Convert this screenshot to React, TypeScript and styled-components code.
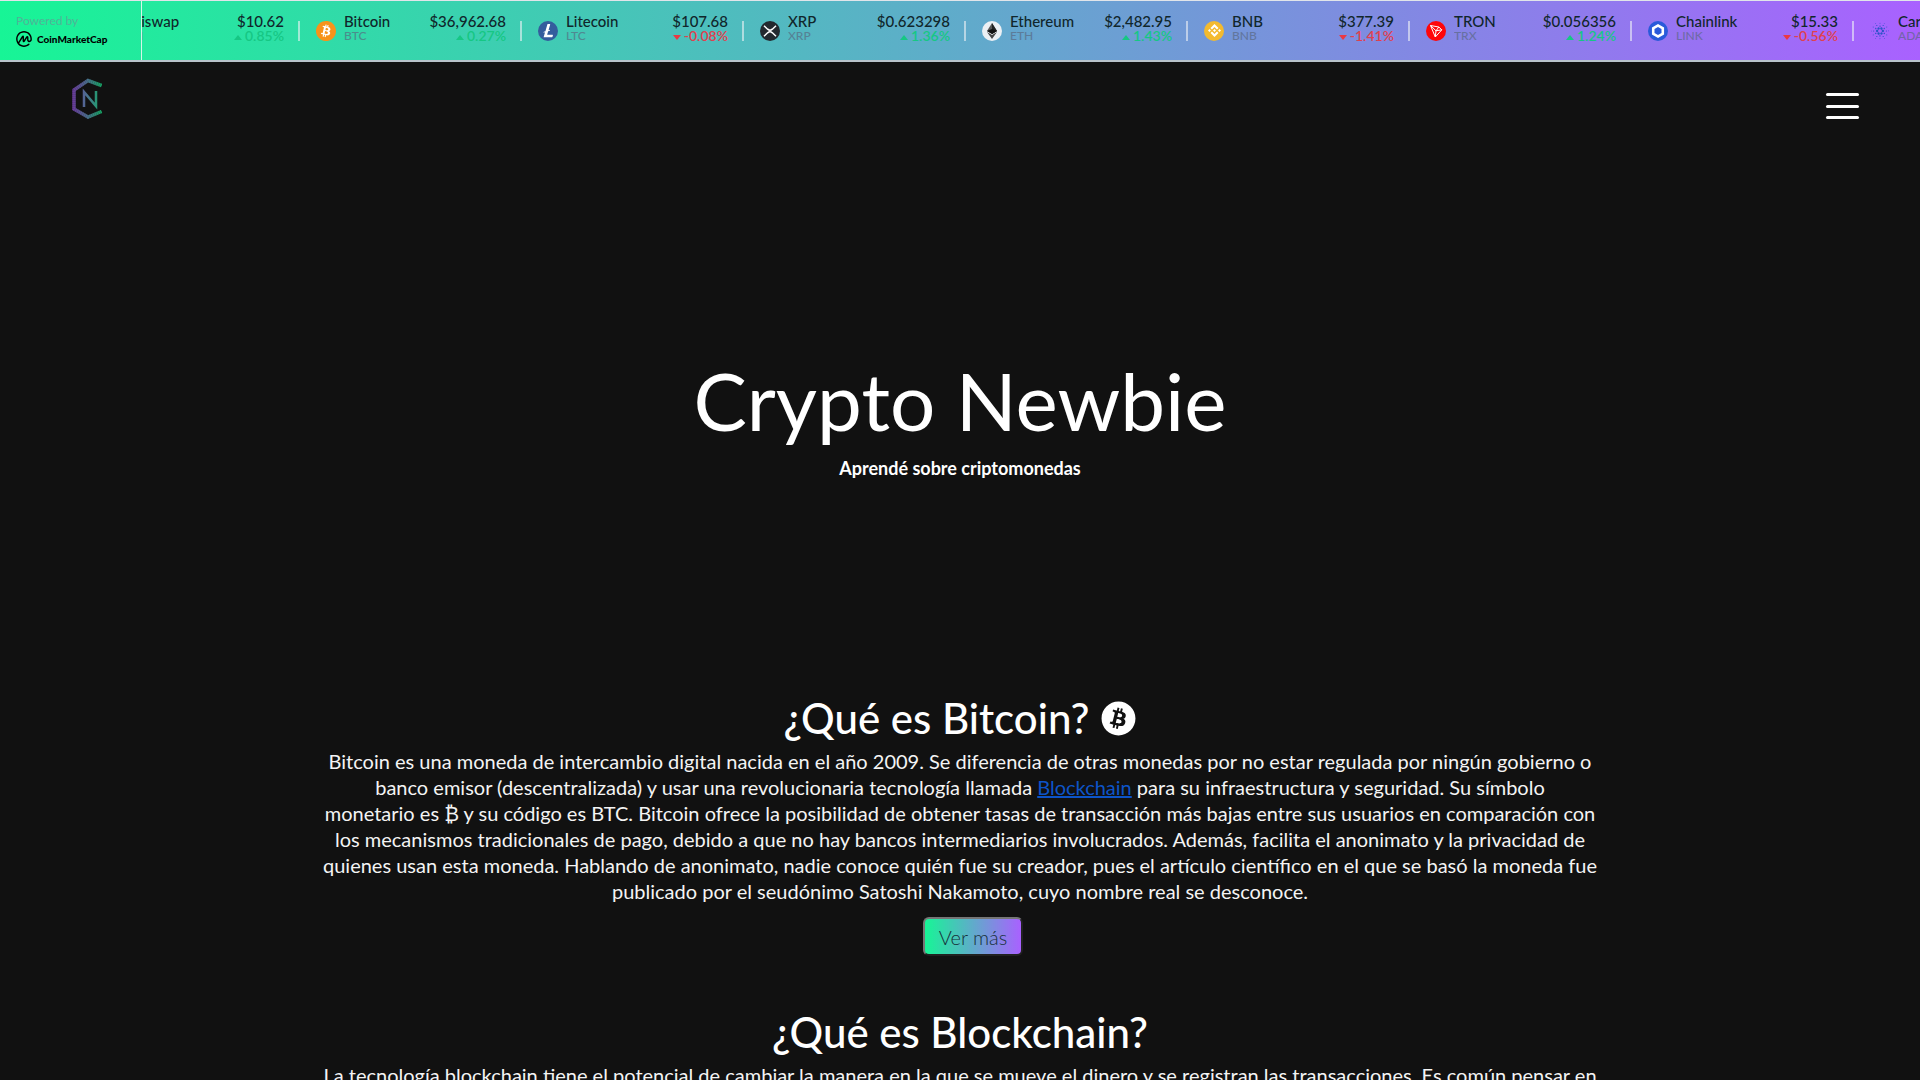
import React from "react";
import styled, { createGlobalStyle } from "styled-components";
import { FaBitcoin } from "react-icons/fa";
import { SiBitcoin, SiLitecoin, SiBinance, SiChainlink, SiCardano, SiCoinmarketcap } from "react-icons/si";

const GlobalStyle = createGlobalStyle`
  *, *::before, *::after { box-sizing: border-box; }
  body {
    margin: 0;
    background: #111;
    color: #fff;
    font-family: Lato, "Open Sans", sans-serif;
    overflow: hidden;
    height: 100vh;
  }
`;

const Ticker = styled.section`
  display: flex;
  height: 62px;
  border-top: 1px solid #e1e5ea;
  border-bottom: 2px solid #b9c3cb;
  background: linear-gradient(90deg, #17f596 0%, #a961ff 100%);
  color: #10262b;
`;

const Powered = styled.a`
  flex: none;
  width: 142px;
  padding: 12px 0 0 16px;
  border-right: 1px solid #d5f5e8;
  color: #000;
  text-decoration: none;
`;

const PoweredLabel = styled.span`
  display: block;
  font-size: 12px;
  line-height: 16px;
  color: #4fb497;
`;

const Brand = styled.span`
  display: flex;
  align-items: center;
  gap: 5px;
  font-size: 10px;
  line-height: 20px;
  font-weight: 900;
`;

const Viewport = styled.div`
  flex: 1;
  min-width: 0;
  overflow: hidden;
`;

const Track = styled.ul`
  display: flex;
  align-items: center;
  height: 100%;
  margin: 0 0 0 -64px;
  padding: 0;
  list-style: none;
`;

const Item = styled.li`
  flex: none;
  display: flex;
  align-items: center;
  gap: 8px;
  width: 222px;
  padding: 0 16px;
  position: relative;
  &::after {
    content: "";
    position: absolute;
    right: 0;
    width: 2px;
    height: 20px;
    background: rgba(239, 242, 245, 0.6);
  }
`;

const Disc = styled.span<{ $bg: string }>`
  flex: none;
  display: grid;
  place-items: center;
  width: 20px;
  height: 20px;
  border-radius: 50%;
  background: ${(p) => p.$bg};
  color: #fff;
`;

const Coin = styled.span`
  flex: 1;
  padding-bottom: 6px;
  font-size: 15px;
  font-weight: 500;
  line-height: 16px;
`;

const Code = styled.span`
  display: block;
  font-size: 12px;
  line-height: 13px;
  color: #58667e;
  opacity: 0.65;
`;

const Quote = styled(Coin)`
  flex: none;
  text-align: right;
`;

const Change = styled.span<{ $up: boolean }>`
  display: flex;
  align-items: center;
  justify-content: flex-end;
  gap: 3px;
  font-size: 14px;
  font-weight: 600;
  line-height: 13px;
  color: ${(p) => (p.$up ? "#16c784" : "#e0404e")};
  &::before {
    content: "";
    margin-top: 4px;
    border: 4px solid transparent;
    border-top-width: ${(p) => (p.$up ? 0 : 5)}px;
    border-bottom-width: ${(p) => (p.$up ? 5 : 0)}px;
    border-top-color: ${(p) => (p.$up ? "transparent" : "#ea3943")};
    border-bottom-color: ${(p) => (p.$up ? "#16c784" : "transparent")};
  }
`;

const Nav = styled.nav`
  display: flex;
  justify-content: space-between;
  padding: 16px 61px 0 70px;
`;

const MenuButton = styled.button`
  display: grid;
  align-content: space-between;
  width: 33px;
  height: 26px;
  margin-top: 15px;
  padding: 0;
  border: 0;
  background: none;
`;

const MenuBar = styled.span`
  height: 3px;
  border-radius: 2px;
  background: #fff;
`;

const Hero = styled.header`
  padding-top: 229px;
  text-align: center;
`;

const Title = styled.h1`
  margin: 0;
  font-size: 80px;
  line-height: 96px;
  font-weight: 400;
`;

const Lead = styled.p`
  margin: 8px 0 0;
  font-size: 18px;
  line-height: 24px;
  font-weight: 700;
`;

const Topic = styled.section`
  max-width: 1300px;
  margin: 0 auto;
  text-align: center;
`;

const Topics = styled.main`
  display: grid;
  gap: 46px;
  padding-top: 208px;
`;

const Heading = styled.h2`
  display: flex;
  justify-content: center;
  align-items: center;
  gap: 12px;
  margin: 0;
  font-size: 42px;
  line-height: 60px;
  font-weight: 500;
`;

const Body = styled.p`
  margin: 0;
  font-size: 20px;
  line-height: 26px;
  color: #f4f4f4;
`;

const TextLink = styled.a`
  color: #0d54c8;
  text-decoration: underline;
`;

const MoreButton = styled.button`
  height: 39px;
  margin: 13px 0 0 26px;
  padding: 0 14px;
  border: 2px outset #767676;
  border-radius: 6px;
  background: linear-gradient(90deg, #17f596, #a961ff);
  color: #17303a;
  font: 300 20px/30px Lato, sans-serif;
`;

const XrpIcon = () => (
  <svg width="14" height="12" viewBox="0 0 14 12" fill="none" stroke="#fff" strokeWidth="1.5" aria-hidden="true">
    <path d="M1 .8 4.600 4.200Q7 6.200 9.400 4.200L13 .8M1 11.200 4.600 7.800Q7 5.800 9.400 7.800L13 11.200" />
  </svg>
);

const EthIcon = () => (
  <svg width="10" height="16" viewBox="0 0 10 16" aria-hidden="true">
    <path d="M5 0 0 8l5 3 5-3z" fill="#555" />
    <path d="M5 0v11l5-3z" fill="#222" />
    <path d="m0 9 5 7 5-7-5 3z" fill="#444" />
    <path d="m0 8 5-2 5 2-5 3z" fill="#111" />
  </svg>
);

const TronIcon = () => (
  <svg width="14" height="14" viewBox="0 0 14 14" fill="none" stroke="#fff" strokeWidth="1" strokeLinejoin="round" aria-hidden="true">
    <path d="M1.5 1.5 9.8 3l3 2.8L6.3 13zM1.5 1.5 7 6.8l5.8-1M7 6.8 6.3 13M7 6.8 9.8 3" />
  </svg>
);

const LogoIcon = () => (
  <svg width="34" height="42" viewBox="0 0 34 42" fill="none" aria-label="Crypto Newbie">
    <defs>
      <linearGradient id="logo" gradientUnits="userSpaceOnUse" x1="2" y1="0" x2="32" y2="0">
        <stop offset="0.05" stopColor="#6b3fa0" />
        <stop offset="0.5" stopColor="#4c7090" />
        <stop offset="0.95" stopColor="#18a468" />
      </linearGradient>
    </defs>
    <g stroke="url(#logo)">
      <path d="M31.500 7.500 18 2.500 4 12v19l14 8 13.500-5.500" strokeWidth="3.500" opacity=".8" />
      <path d="M31.500 7.500 18 2.500 4 12v19l14 8 13.500-5.500" strokeWidth="3" strokeDasharray="1 1" />
      <path d="M14 29V14l12 14V13" strokeWidth="2.500" />
    </g>
  </svg>
);

const glyphBacking = "radial-gradient(circle, #fff 8px, transparent 9px)";

const coins = [
  { name: "Uniswap", code: "UNI", price: "$10.62", change: "0.85%", bg: "#ff007a", icon: null },
  { name: "Bitcoin", code: "BTC", price: "$36,962.68", change: "0.27%", bg: glyphBacking, icon: <SiBitcoin size={20} color="#f7931a" /> },
  { name: "Litecoin", code: "LTC", price: "$107.68", change: "-0.08%", bg: glyphBacking, icon: <SiLitecoin size={20} color="#345d9d" /> },
  { name: "XRP", code: "XRP", price: "$0.623298", change: "1.36%", bg: "#23292f", icon: <XrpIcon /> },
  { name: "Ethereum", code: "ETH", price: "$2,482.95", change: "1.43%", bg: "#ecf0f4", icon: <EthIcon /> },
  { name: "BNB", code: "BNB", price: "$377.39", change: "-1.41%", bg: "#f3ba2f", icon: <SiBinance size={13} /> },
  { name: "TRON", code: "TRX", price: "$0.056356", change: "1.24%", bg: "#ff060a", icon: <TronIcon /> },
  { name: "Chainlink", code: "LINK", price: "$15.33", change: "-0.56%", bg: "#2a5ada", icon: <SiChainlink size={14} /> },
  { name: "Cardano", code: "ADA", price: "$1.05", change: "0.41%", bg: "transparent", icon: <SiCardano size={18} color="#2a52c8" /> },
];

export default function App() {
  return (
    <>
      <GlobalStyle />
      <Ticker aria-label="Cotizaciones">
        <Powered href="#coinmarketcap">
          <PoweredLabel>Powered by</PoweredLabel>
          <Brand><SiCoinmarketcap size={16} />CoinMarketCap</Brand>
        </Powered>
        <Viewport>
          <Track>
            {coins.map((c) => (
              <Item key={c.code}>
                <Disc $bg={c.bg}>{c.icon}</Disc>
                <Coin>{c.name}<Code>{c.code}</Code></Coin>
                <Quote>{c.price}<Change $up={!c.change.startsWith("-")}>{c.change}</Change></Quote>
              </Item>
            ))}
          </Track>
        </Viewport>
      </Ticker>
      <Nav>
        <a href="#inicio"><LogoIcon /></a>
        <MenuButton type="button" aria-label="Menú"><MenuBar /><MenuBar /><MenuBar /></MenuButton>
      </Nav>
      <Hero>
        <Title>Crypto Newbie</Title>
        <Lead>Aprendé sobre criptomonedas</Lead>
      </Hero>
      <Topics>
        <Topic>
          <Heading>¿Qué es Bitcoin? <FaBitcoin size={35} /></Heading>
          <Body>
            Bitcoin es una moneda de intercambio digital nacida en el año 2009. Se diferencia de otras monedas por no estar regulada por ningún gobierno o banco emisor (descentralizada) y usar una revolucionaria tecnología llamada <TextLink href="#blockchain">Blockchain</TextLink> para su infraestructura y seguridad. Su símbolo<br />
            monetario es ₿ y su código es BTC. Bitcoin ofrece la posibilidad de obtener tasas de transacción más bajas entre sus usuarios en comparación con<br />
            los mecanismos tradicionales de pago, debido a que no hay bancos intermediarios involucrados. Además, facilita el anonimato y la privacidad de<br />
            quienes usan esta moneda. Hablando de anonimato, nadie conoce quién fue su creador, pues el artículo científico en el que se basó la moneda fue<br />
            publicado por el seudónimo Satoshi Nakamoto, cuyo nombre real se desconoce.
          </Body>
          <MoreButton type="button">Ver más</MoreButton>
        </Topic>
        <Topic id="blockchain">
          <Heading>¿Qué es Blockchain?</Heading>
          <Body>
            La tecnología blockchain tiene el potencial de cambiar la manera en la que se mueve el dinero y se registran las transacciones. Es común pensar en
          </Body>
        </Topic>
      </Topics>
    </>
  );
}
